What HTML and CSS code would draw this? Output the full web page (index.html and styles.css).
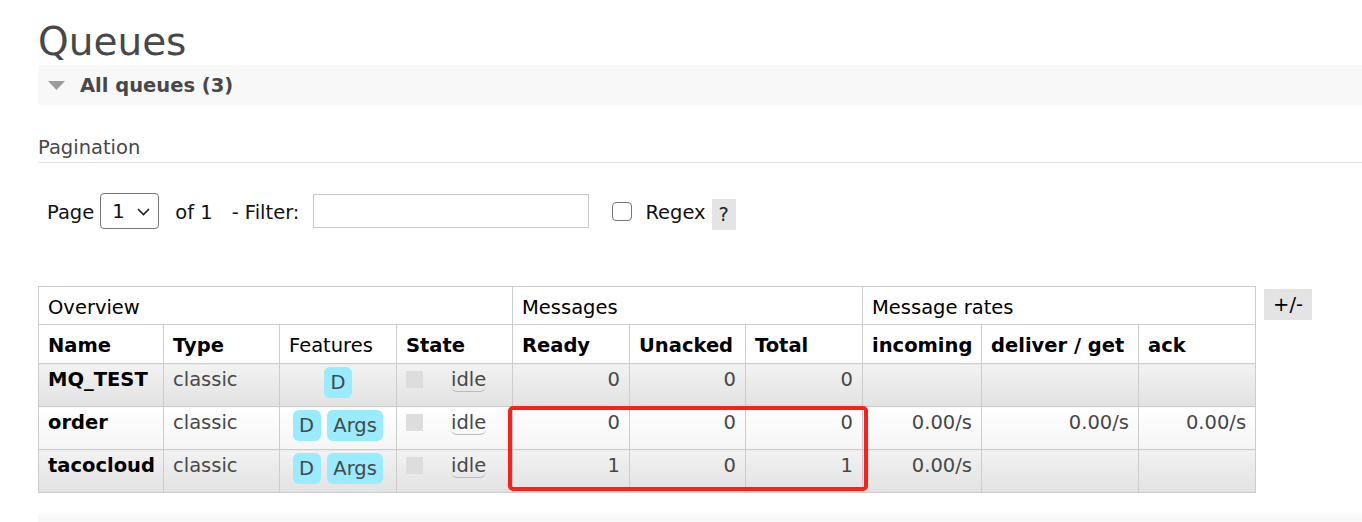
FILE: index.html
```html
<!DOCTYPE html>
<html>
<head>
<meta charset="utf-8">
<link rel="stylesheet" href="styles.css">
</head>
<body>
<div class="main">
  <h1 class="title">Queues</h1>
  <div class="section-head">
    <svg class="tri" width="17" height="9" viewBox="0 0 17 9"><polygon points="0,0 17,0 8.5,9" fill="#9c9c9c"/></svg>
    <span>All queues (3)</span>
  </div>

  <h3 class="pag-title">Pagination</h3>

  <div class="pag-row">
    <span class="lbl">Page</span>
    <span class="sel-wrap">
      <select class="page-select"><option>1</option></select>
      <svg class="chev" width="13" height="8" viewBox="0 0 13 8"><polyline points="1,1 6.5,6.5 12,1" fill="none" stroke="#222" stroke-width="1.6"/></svg>
    </span>
    <span class="lbl of">of 1</span>
    <span class="lbl filter">- Filter:</span>
    <input class="filter-input" type="text">
    <input class="chk" type="checkbox">
    <span class="lbl regex">Regex</span>
    <span class="help">?</span>
  </div>

  <div class="table-row">
    <div class="table-wrap">
      <table class="list">
        <colgroup>
          <col class="w125"><col class="w116"><col class="w117"><col class="w116"><col class="w117"><col class="w116"><col class="w117"><col class="w119"><col class="w157"><col class="w117">
        </colgroup>
        <thead>
          <tr class="h1row">
            <th colspan="4">Overview</th>
            <th colspan="3">Messages</th>
            <th colspan="3">Message rates</th>
          </tr>
          <tr class="h2row">
            <th class="b">Name</th>
            <th class="b">Type</th>
            <th>Features</th>
            <th class="b">State</th>
            <th class="b">Ready</th>
            <th class="b">Unacked</th>
            <th class="b">Total</th>
            <th class="b">incoming</th>
            <th class="b">deliver / get</th>
            <th class="b">ack</th>
          </tr>
        </thead>
        <tbody>
          <tr class="alt1">
            <td class="name">MQ_TEST</td>
            <td>classic</td>
            <td class="feat"><span class="badge">D</span></td>
            <td><span class="sq"></span><span class="idle">idle</span></td>
            <td class="r">0</td>
            <td class="r">0</td>
            <td class="r">0</td>
            <td class="r"></td>
            <td class="r"></td>
            <td class="r"></td>
          </tr>
          <tr class="alt2">
            <td class="name">order</td>
            <td>classic</td>
            <td class="feat"><span class="badge">D</span> <span class="badge">Args</span></td>
            <td><span class="sq"></span><span class="idle">idle</span></td>
            <td class="r">0</td>
            <td class="r">0</td>
            <td class="r">0</td>
            <td class="r">0.00/s</td>
            <td class="r">0.00/s</td>
            <td class="r">0.00/s</td>
          </tr>
          <tr class="alt1">
            <td class="name">tacocloud</td>
            <td>classic</td>
            <td class="feat"><span class="badge">D</span> <span class="badge">Args</span></td>
            <td><span class="sq"></span><span class="idle">idle</span></td>
            <td class="r">1</td>
            <td class="r">0</td>
            <td class="r">1</td>
            <td class="r">0.00/s</td>
            <td class="r"></td>
            <td class="r"></td>
          </tr>
        </tbody>
      </table>
      <div class="highlight"></div>
    </div>
    <span class="plusminus">+/-</span>
  </div>

  <div class="section-foot"></div>
</div>
</body>
</html>
```

FILE: styles.css
```css
html, body {
  margin: 0;
  padding: 0;
  background: #fff;
}
body {
  font-family: "DejaVu Sans", Verdana, sans-serif;
  font-size: 19.5px;
  line-height: 1.2;
  color: #484848;
  overflow: hidden;
}
.main {
  padding-left: 38px;
}
.title {
  margin: 0;
  padding-top: 18px;
  font-size: 39px;
  line-height: 47px;
  font-weight: normal;
  color: #484848;
}
.section-head {
  height: 40px;
  background: #f8f8f8;
  display: flex;
  align-items: center;
  padding-left: 10px;
  font-weight: bold;
  color: #484848;
}
.tri {
  margin-right: 15px;
  margin-top: 1px;
}
.section-head span {
  padding-top: 2px;
}
.pag-title {
  margin: 31px 0 0 0;
  font-size: 19.5px;
  font-weight: normal;
  line-height: 23.4px;
  padding-bottom: 3px;
  border-bottom: 1px solid #e0e0e0;
  color: #484848;
}
.pag-row {
  display: flex;
  align-items: center;
  height: 36px;
  margin-top: 30px;
  padding-left: 9px;
  color: #111;
}
.lbl {
  line-height: 23.4px;
  padding-top: 3px;
}
.sel-wrap {
  position: relative;
  margin-left: 6px;
  display: block;
  width: 59px;
  height: 36px;
}
.page-select {
  appearance: none;
  -webkit-appearance: none;
  width: 59px;
  height: 36px;
  margin: 0;
  box-sizing: border-box;
  border: 1px solid #767676;
  border-radius: 4px;
  background: #fff;
  font-family: "DejaVu Sans", Verdana, sans-serif;
  font-size: 19.5px;
  color: #111;
  padding: 0 0 0 11px;
}
.chev {
  position: absolute;
  left: 37px;
  top: 15px;
}
.of {
  margin-left: 16px;
}
.filter {
  margin-left: 19px;
}
.filter-input {
  margin: 0 0 0 14px;
  width: 276px;
  height: 34px;
  box-sizing: border-box;
  border: 1px solid #c8c8c8;
  background: #fff;
  padding: 0;
}
.chk {
  appearance: none;
  -webkit-appearance: none;
  margin: 0 0 0 23px;
  width: 20px;
  height: 19px;
  box-sizing: border-box;
  border: 1.5px solid #767676;
  border-radius: 4px;
  background: #fff;
}
.regex {
  margin-left: 13px;
}
.help {
  margin-left: 6px;
  margin-top: 7px;
  width: 24px;
  height: 31px;
  background: #e4e4e4;
  color: #222;
  text-align: center;
  line-height: 31px;
}
.table-row {
  display: flex;
  align-items: flex-start;
  gap: 8px;
  margin-top: 57px;
}
.table-wrap {
  position: relative;
}
.list {
  border-collapse: collapse;
  table-layout: fixed;
  width: 1218px;
}
.w125 { width: 125px; }
.w116 { width: 116px; }
.w117 { width: 117px; }
.w119 { width: 119px; }
.w157 { width: 157px; }
.list th, .list td {
  border: 1px solid #cccccc;
  padding: 0 9px;
  text-align: left;
  white-space: nowrap;
  overflow: visible;
}
.list th {
  font-weight: normal;
  color: #000;
  background: #fff;
  vertical-align: middle;
  padding-top: 3px;
}
.list th.b {
  font-weight: bold;
}
.h1row {
  height: 38px;
}
.h2row {
  height: 39px;
}
.list tbody tr {
  height: 43px;
}
.list td {
  vertical-align: top;
  padding-top: 4px;
  color: #484848;
}
.alt1 td {
  background: linear-gradient(#f2f2f2, #e2e2e2);
}
.alt2 td {
  background: linear-gradient(#ffffff, #f5f5f5);
}
.list td.name {
  font-weight: bold;
  color: #000;
}
.list td.r {
  text-align: right;
}
.list td.feat {
  text-align: center;
}
.badge {
  display: inline-block;
  vertical-align: top;
  margin-top: -1px;
  padding: 4px 6.5px;
  line-height: 23px;
  background: #99ebff;
  border-radius: 6px;
  color: #484848;
}
.sq {
  display: inline-block;
  width: 17px;
  height: 17px;
  background: #dddddd;
  vertical-align: -2px;
}
.idle {
  margin-left: 28px;
  border-bottom: 1px solid #bbbbbb;
  border-radius: 6px;
}
.highlight {
  position: absolute;
  left: 470px;
  top: 120px;
  width: 360px;
  height: 85px;
  box-sizing: border-box;
  border: 4px solid #fe2018;
  border-radius: 5px;
}
.plusminus {
  margin-top: 3px;
  width: 48px;
  height: 31px;
  background: #e4e4e4;
  color: #000;
  text-align: center;
  line-height: 31px;
}
.section-foot {
  margin-top: 21px;
  height: 9px;
  background: #f8f8f8;
}
```
